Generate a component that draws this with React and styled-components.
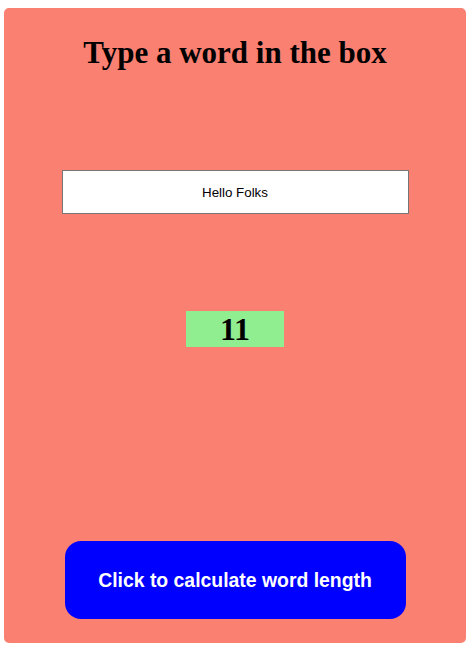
import React, { useState } from "react";
import styled, { createGlobalStyle } from "styled-components";

const GlobalStyle = createGlobalStyle`
  html, body {
    margin: 0;
    padding: 0;
    background: #ffffff;
  }
  body {
    padding: 8px 8px 0 4px;
  }
`;

const Card = styled.div`
  width: 462px;
  height: 635px;
  box-sizing: border-box;
  background: salmon;
  border-radius: 5px;
  display: flex;
  flex-direction: column;
  align-items: center;
`;

const Title = styled.h1`
  margin: 27px 0 0 0;
  font-family: "Liberation Serif", "Times New Roman", serif;
  font-size: 31px;
  line-height: 36px;
  font-weight: 700;
  color: #000;
  text-align: center;
`;

const WordInput = styled.input`
  margin-top: 99px;
  width: 347px;
  height: 44px;
  box-sizing: border-box;
  border: 1px solid #767676;
  background: #fff;
  text-align: center;
  font-family: "Liberation Sans", Arial, sans-serif;
  font-size: 13.33px;
  color: #000;
  outline: none;
  padding: 0 4px;
`;

const Result = styled.div`
  margin-top: 97px;
  width: 98px;
  height: 36px;
  background: lightgreen;
  font-family: "Liberation Serif", "Times New Roman", serif;
  font-size: 32px;
  font-weight: 700;
  line-height: 36px;
  text-align: center;
  color: #000;
`;

const CalcButton = styled.button`
  margin-top: auto;
  margin-bottom: 24px;
  width: 341px;
  height: 78px;
  border: none;
  border-radius: 16px;
  background: blue;
  color: #fff;
  font-family: "Liberation Sans", Arial, sans-serif;
  font-size: 19.4px;
  font-weight: 700;
  cursor: pointer;
`;

export default function App() {
  const [word, setWord] = useState("Hello Folks");
  const [length, setLength] = useState(11);

  return (
    <>
      <GlobalStyle />
      <Card>
        <Title>Type a word in the box</Title>
        <WordInput value={word} onChange={e => setWord(e.target.value)} />
        <Result>{length}</Result>
        <CalcButton onClick={() => setLength(word.length)}>
          Click to calculate word length
        </CalcButton>
      </Card>
    </>
  );
}
